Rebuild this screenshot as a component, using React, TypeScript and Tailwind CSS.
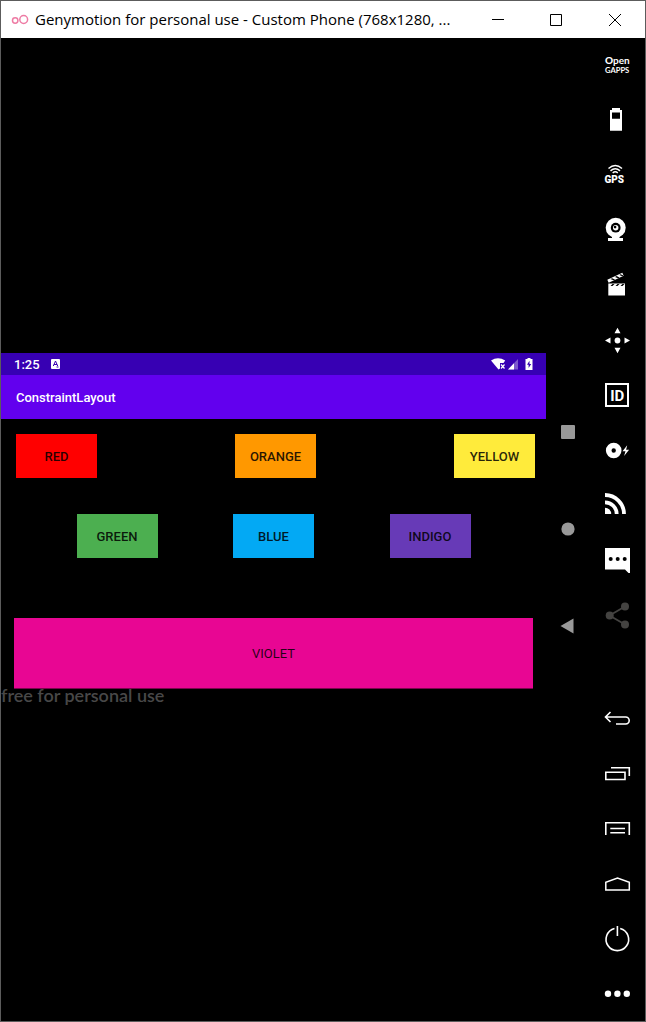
import React from "react";

type Tool = { label: string; art: React.ReactNode };

const upperTools: Tool[] = [
  {
    label: "Open GApps",
    art: (
      <g fill="#fff" className="font-['Lato',sans-serif]">
        <text x="16" y="26" fontSize="10" fontWeight="900">O</text>
        <text x="24" y="26" fontSize="10" fontWeight="700">pen</text>
        <text x="16" y="35" fontSize="7.600" fontWeight="700">GAPPS</text>
      </g>
    ),
  },
  {
    label: "Battery",
    art: <path fill="#fff" fillRule="evenodd" d="M23 15h8v2h2v20.700h-12V17h2zM23 19.500v6.200h8v-6.200z" />,
  },
  {
    label: "GPS",
    art: (
      <g>
        <g fill="none" stroke="#fff" strokeWidth="1.500">
          <path d="M19.500 20.500Q26.300 14.500 33 20.500M21.500 22.900Q26.300 18.500 31 22.900" />
          <path d="M23.700 25Q26.300 22.600 28.800 25" />
        </g>
        <text x="15.500" y="35" fontSize="10" fontWeight="900" fill="#fff" className="font-['Roboto',sans-serif]">GPS</text>
      </g>
    ),
  },
  {
    label: "Camera",
    art: (
      <g>
        <circle cx="26.700" cy="24.700" r="10" fill="#fff" />
        <circle cx="26.700" cy="24.700" r="4.900" fill="#000" />
        <circle cx="26.700" cy="24.700" r="2.700" fill="#fff" />
        <circle cx="26.100" cy="24.100" r="1.300" fill="#000" />
        <path d="M23 33h7.500v2H34v3H19v-3h4z" fill="#fff" />
      </g>
    ),
  },
  {
    label: "Screencast",
    art: (
      <g>
        <path d="M19.300 25.500H36v12H19.300z" fill="#fff" />
        <path d="M21.500 28l2-2h2l-2 2zM26.500 28l2-2h2l-2 2zM31.500 28l2-2h2l-2 2z" fill="#000" />
        <path d="M18.300 21.800L33.300 14.800l1.400 3-15 7z" fill="#fff" />
        <path d="M21.500 21l3 1.300 1.600-.8-3-1.300zM26 18.900l3 1.300 1.600-.8-3-1.300zM30.300 16.900l3 1.300 1.200-.6-3-1.300z" fill="#000" />
      </g>
    ),
  },
  {
    label: "Multi-touch",
    art: (
      <g fill="#fff">
        <circle cx="28.500" cy="27.500" r="2.900" />
        <path d="M28.500 14.700l3 5.500h-6zM28.500 40.300l3-5.500h-6zM16 27.500l5.500-3v6zM41 27.500l-5.500-3v6z" />
      </g>
    ),
  },
  {
    label: "Identifiers",
    art: (
      <g>
        <path d="M17 16h22v22H17z" fill="none" stroke="#fff" strokeWidth="2" />
        <text x="28.300" y="33" textAnchor="middle" fontSize="15" fontWeight="700" fill="#fff" className="font-['Roboto',sans-serif]">ID</text>
      </g>
    ),
  },
  {
    label: "Disk speed",
    art: (
      <g fill="#fff">
        <circle cx="24.700" cy="27.500" r="5" fill="none" stroke="#fff" strokeWidth="5.600" />
        <path d="M38.200 22.300l-4.700 6h3l-1.400 4.600 5-6.200h-3z" />
      </g>
    ),
  },
  {
    label: "Network",
    art: (
      <g fill="none" stroke="#fff" strokeWidth="3.800">
        <path d="M16 17A19 19 0 0 1 35 36M16 24.300A11.700 11.700 0 0 1 27.700 36" />
        <path d="M16 29.800A6.200 6.200 0 0 1 22.200 36H16z" fill="#fff" stroke="none" />
      </g>
    ),
  },
  {
    label: "Phone and messages",
    art: (
      <g>
        <path d="M16 15h25v25h-1.500L36 36.500H16z" fill="#fff" />
        <circle cx="21.700" cy="26" r="2" />
        <circle cx="28.700" cy="26" r="2" />
        <circle cx="35.700" cy="26" r="2" />
      </g>
    ),
  },
  {
    label: "Share",
    art: (
      <g fill="#444341">
        <path d="M36 18.500l-15.500 9L36 36.500" fill="none" stroke="#444341" strokeWidth="1.800" />
        <circle cx="36" cy="18.500" r="4" />
        <circle cx="20.700" cy="27.500" r="4" />
        <circle cx="36" cy="36.500" r="4" />
      </g>
    ),
  },
];

const lowerTools: Tool[] = [
  {
    label: "Back",
    art: <path d="M21.500 21L16.500 26l5 5M16.500 26H36.700A3.500 3.500 0 0 1 36.700 33H27" fill="none" stroke="#fff" strokeWidth="1.600" />,
  },
  {
    label: "Recent apps",
    art: <path d="M22 21.800H40.300V30M16.800 26.200H36v7.300H16.800z" fill="none" stroke="#fff" strokeWidth="1.600" />,
  },
  {
    label: "Menu",
    art: <path d="M16.800 34V21.800H40.300V34M21.300 27.500H36M21.300 31.700H36" fill="none" stroke="#fff" strokeWidth="1.600" />,
  },
  {
    label: "Home",
    art: <path d="M16.800 34V26.300L28.500 22l11.800 4.300V34z" fill="none" stroke="#fff" strokeWidth="1.500" />,
  },
  {
    label: "Power",
    art: <path d="M25.500 17.400A11.300 11.300 0 1 0 31.200 17.400M28.400 15V25" fill="none" stroke="#fff" strokeWidth="1.600" />,
  },
  {
    label: "More",
    art: (
      <g fill="#fff">
        <circle cx="19" cy="27.700" r="3.200" />
        <circle cx="28.400" cy="27.700" r="3.200" />
        <circle cx="37.800" cy="27.700" r="3.200" />
      </g>
    ),
  },
];

function ToolGroup({ tools }: { tools: Tool[] }) {
  return (
    <div className="flex flex-col">
      {tools.map((tool) => (
        <button key={tool.label} type="button" aria-label={tool.label} className="h-[55px] w-14">
          <svg viewBox="0 0 56 55" className="h-full w-full">
            {tool.art}
          </svg>
        </button>
      ))}
    </div>
  );
}

function ColorButton({ name, color }: { name: string; color: string }) {
  return (
    <button type="button" className={`h-11 w-[81px] pt-0.5 text-[13px] font-medium text-black/85 ${color}`}>
      {name}
    </button>
  );
}

function TitleBar() {
  return (
    <header className="flex h-[37px] shrink-0 items-center bg-white text-black">
      <svg viewBox="0 0 18 12" className="ml-[10px] h-3 w-[18px] shrink-0" fill="none" stroke="#ee7ba4" strokeWidth="1.500">
        <circle cx="4.200" cy="6.500" r="2.700" />
        <circle cx="12.700" cy="5.500" r="3.900" />
      </svg>
      <h1 className="ml-[6px] min-w-0 flex-1 truncate font-['Open_Sans',sans-serif] text-[15px]">
        Genymotion for personal use - Custom Phone (768x1280, ...
      </h1>
      <div className="flex h-full shrink-0">
        <button type="button" aria-label="Minimize" className="flex w-[58px] items-center justify-center">
          <svg viewBox="0 0 12 12" className="h-3 w-3" stroke="#000"><path d="M0 5.500h12" /></svg>
        </button>
        <button type="button" aria-label="Maximize" className="flex w-[58px] items-center justify-center">
          <svg viewBox="0 0 12 12" className="h-3 w-3" stroke="#000" fill="none"><path d="M.5.5h11v11H.5z" /></svg>
        </button>
        <button type="button" aria-label="Close" className="flex w-[60px] items-center justify-center">
          <svg viewBox="0 0 12 12" className="h-3 w-3" stroke="#000"><path d="M0 0l12 12M12 0L0 12" /></svg>
        </button>
      </div>
    </header>
  );
}

function StatusBar() {
  return (
    <div className="flex h-[22px] items-center justify-between bg-[#3700b3] px-[13px] text-white">
      <div className="flex items-center gap-[11px]">
        <span className="pt-0.5 text-[13px] font-medium">1:25</span>
        <svg viewBox="0 0 9 10" className="h-[10px] w-[9px]">
          <rect width="9" height="10" rx="1" fill="#fff" />
          <path d="M2.300 7L4.500 2l2.200 5M3 5.500h3M5.500 8h2" stroke="#3700b3" strokeWidth="1" fill="none" />
        </svg>
      </div>
      <svg viewBox="0 0 42 12" className="h-3 w-[42px]">
        <path d="M0 2.600Q7 -2.200 14.200 2.600L12.500 5H9v5.500L7.500 11.500z" fill="#fff" />
        <path d="M10 6.500l3.500 4M13.500 6.500l-3.500 4" stroke="#fff" strokeWidth="1.200" />
        <path d="M27 1v10.500H17z" fill="#fff" opacity=".35" />
        <path d="M23 5.200v6.300h-6z" fill="#fff" />
        <path d="M36.500 0h3v1H41.500v11h-7V1h2z" fill="#fff" />
        <path d="M38.500 2.700l-2.500 4h1.600v3.200L40.200 6h-1.700z" fill="#3700b3" />
      </svg>
    </div>
  );
}

function NavigationKeys() {
  return (
    <nav className="flex w-[43px] shrink-0 flex-col items-center gap-[83px] pb-0.5">
      <button type="button" aria-label="Overview" className="h-[14px] w-[14px]">
        <svg viewBox="0 0 14 14" fill="#999"><rect width="14" height="14" rx="1" /></svg>
      </button>
      <button type="button" aria-label="Device home" className="h-[14px] w-[14px]">
        <svg viewBox="0 0 14 14" fill="#999"><circle cx="7" cy="7" r="6.600" /></svg>
      </button>
      <button type="button" aria-label="Device back" className="h-[14px] w-[14px]">
        <svg viewBox="0 0 14 14" fill="#999" className="overflow-visible"><path d="M-.5 7L12.500-.5v15z" /></svg>
      </button>
    </nav>
  );
}

function PhoneScreen() {
  return (
    <section className="min-w-0 flex-1 font-['Roboto',sans-serif]">
      <StatusBar />
      <div className="flex h-11 items-center bg-[#6200ee] pt-0.5 pl-[15px]">
        <h2 className="text-[13px] font-medium text-white">ConstraintLayout</h2>
      </div>
      <div className="flex justify-between pt-[15px] pr-[11px] pl-[15px]">
        <ColorButton name="RED" color="bg-[#ff0000]" />
        <ColorButton name="ORANGE" color="bg-[#ff9800]" />
        <ColorButton name="YELLOW" color="bg-[#ffeb3b]" />
      </div>
      <div className="flex justify-evenly pt-9">
        <ColorButton name="GREEN" color="bg-[#4caf50]" />
        <ColorButton name="BLUE" color="bg-[#03a9f4]" />
        <ColorButton name="INDIGO" color="bg-[#673ab7]" />
      </div>
      <div className="px-[13px] pt-[60px]">
        <button type="button" className="h-[71px] w-full border-b border-[#7a044d] bg-[#e80693] pt-0.5 text-[13px] text-black/85">
          VIOLET
        </button>
      </div>
      <p className="pb-1 font-['Lato',sans-serif] text-[18px] leading-[13px] font-semibold text-[#484848]">
        free for personal use
      </p>
    </section>
  );
}

export default function App() {
  return (
    <div className="flex min-h-screen flex-col border border-[#5c5c5c] bg-black">
      <TitleBar />
      <main className="flex flex-1">
        <div className="flex min-w-0 flex-1 items-center">
          <PhoneScreen />
          <NavigationKeys />
        </div>
        <aside className="flex shrink-0 flex-col justify-between">
          <ToolGroup tools={upperTools} />
          <ToolGroup tools={lowerTools} />
        </aside>
      </main>
    </div>
  );
}
